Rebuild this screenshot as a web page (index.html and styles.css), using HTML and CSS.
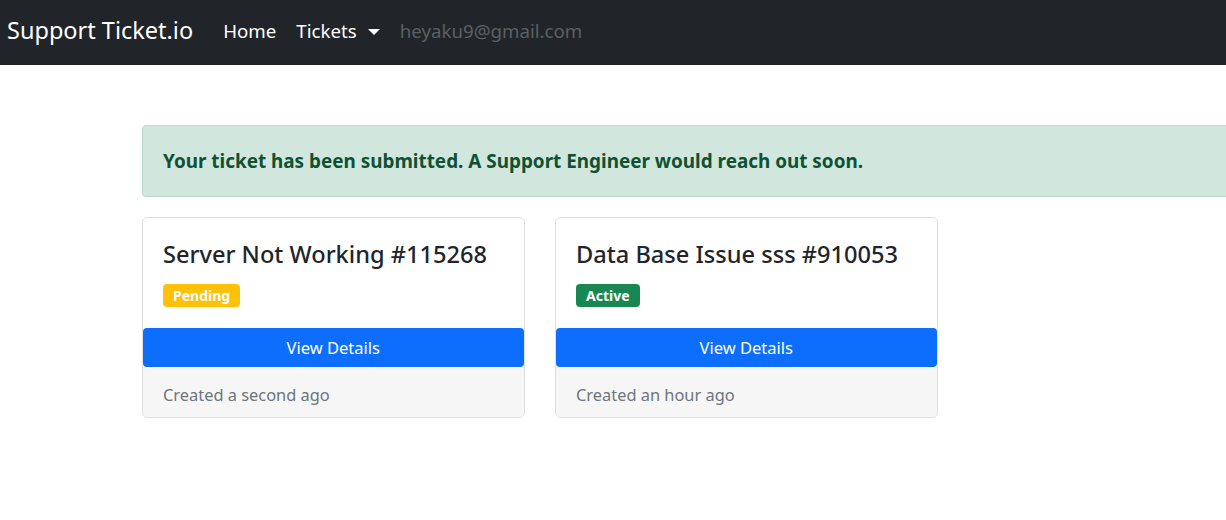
FILE: index.html
```html
<!DOCTYPE html>
<html>
<head>
<meta charset="utf-8">
<link rel="stylesheet" href="styles.css">
</head>
<body>
<nav class="navbar">
  <a class="brand" href="#">Support Ticket.io</a>
  <ul class="nav">
    <li><a class="nav-link" href="#">Home</a></li>
    <li><a class="nav-link dropdown" href="#">Tickets <span class="caret"></span></a></li>
    <li><span class="nav-link muted">heyaku9@gmail.com</span></li>
  </ul>
</nav>
<main class="container">
  <div class="alert">Your ticket has been submitted. A Support Engineer would reach out soon.</div>
  <div class="cards">
    <div class="card">
      <div class="card-body">
        <h4 class="card-title">Server Not Working #115268</h4>
        <span class="badge pending">Pending</span>
      </div>
      <a class="btn" href="#">View Details</a>
      <div class="card-footer">Created a second ago</div>
    </div>
    <div class="card">
      <div class="card-body">
        <h4 class="card-title">Data Base Issue sss #910053</h4>
        <span class="badge active">Active</span>
      </div>
      <a class="btn" href="#">View Details</a>
      <div class="card-footer">Created an hour ago</div>
    </div>
  </div>
</main>
</body>
</html>
```
FILE: styles.css
```css
* { box-sizing: border-box; }
html, body { margin: 0; padding: 0; }
body {
  font-family: "Noto Sans", "Open Sans", sans-serif;
  font-size: 16px;
  line-height: 1.5;
  color: #212529;
  background: #fff;
  overflow-x: hidden;
}
a { text-decoration: none; }
.navbar {
  height: 65px;
  background: #212529;
  display: flex;
  align-items: center;
  padding: 0 7px;
}
.brand {
  color: #fff;
  font-size: 23.5px;
  margin-right: 20px;
  padding-bottom: 3px;
}
.nav {
  list-style: none;
  margin: 0;
  padding: 0;
  display: flex;
  align-items: center;
  padding-bottom: 3px;
}
.nav-link {
  color: #fff;
  font-size: 18.7px;
  padding: 8px 10px;
  display: inline-flex;
  align-items: center;
}
.caret {
  display: inline-block;
  width: 0;
  height: 0;
  margin-left: 11px;
  margin-top: 2px;
  border-left: 6px solid transparent;
  border-right: 6px solid transparent;
  border-top: 6px solid #fff;
}
.muted { color: #5c5f63; margin-left: 0; }
.container {
  padding: 60px 0 0 142px;
}
.alert {
  width: 1120px;
  background: #d1e7dd;
  border: 1px solid #badbcc;
  border-radius: 4px;
  color: #0f5132;
  font-weight: 700;
  font-size: 18.9px;
  padding: 20px 20px;
  height: 72px;
  line-height: 31px;
  margin-bottom: 20px;
}
.cards {
  display: flex;
  gap: 30.5px;
}
.card {
  width: 382.5px;
  border: 1px solid rgba(0,0,0,0.125);
  border-radius: 5px;
  display: flex;
  flex-direction: column;
  overflow: hidden;
}
.card-body {
  padding: 22px 20px 21px;
  display: flex;
  flex-direction: column;
  align-items: flex-start;
}
.card-title {
  margin: 0 0 15px;
  font-size: 23.6px;
  font-weight: 500;
  line-height: 29px;
  height: 29px;
}
.badge {
  display: block;
  color: #fff;
  font-weight: 700;
  font-size: 14px;
  line-height: 15px;
  height: 23px;
  padding: 4px 10px;
  border-radius: 4px;
}
.pending { background: #ffc107; }
.active { background: #198754; }
.btn {
  display: block;
  text-align: center;
  background: #0d6efd;
  color: #fff;
  border-radius: 4px;
  padding: 7px 12px;
  height: 39px;
  font-size: 16.5px;
  line-height: 25px;
}
.card-footer {
  background: #f6f6f6;
  color: #6c757d;
  padding: 16px 20px 10px;
  height: 50px;
  line-height: 24px;
  font-size: 16.4px;
}
```
